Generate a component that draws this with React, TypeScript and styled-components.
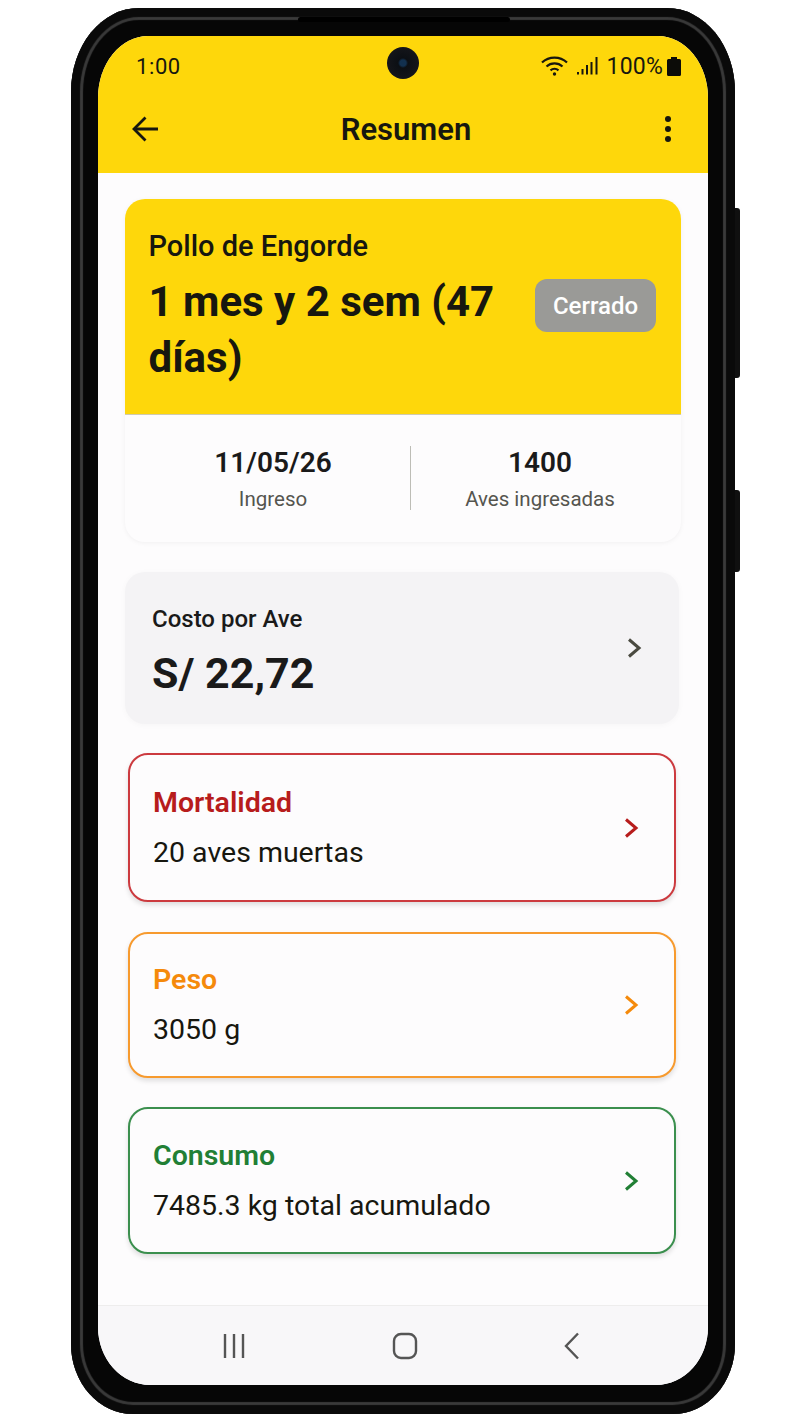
import styled, { createGlobalStyle } from "styled-components";
import { FC } from "react";

const GlobalStyle = createGlobalStyle`
html, body {
    margin: 0;
    padding: 0;
    background: #ffffff;
}
* {
    box-sizing: border-box;
}
body {
    font-family: Roboto, "Noto Sans", sans-serif;
}
`

const color = {
    yellow: "#fed70b",
    ink: "#17170f",
    red: "#b71c1c",
    redBorder: "#cc3a3f",
    orange: "#f58a0b",
    orangeBorder: "#f79a2e",
    green: "#217f35",
    greenBorder: "#3b8f4e",
    surface: "#fdfcfd",
}

interface ChevronProps {
    stroke: string;
}

const Chevron: FC<ChevronProps> = ({ stroke }) =>
    <svg width="16" height="24" viewBox="0 0 16 24" fill="none">
        <path d="M3 3.5 L13 12 L3 20.5" stroke={stroke} strokeWidth="3" strokeLinejoin="miter" />
    </svg>

const WifiIcon: FC = () =>
    <svg width="27" height="20" viewBox="0 0 27 20" fill="none" stroke="#17170f" strokeWidth="2.2">
        <path d="M1 6.5 C8 0 19 0 26 6.5" />
        <path d="M5.5 10.5 C10 6.4 17 6.4 21.5 10.5" />
        <path d="M9.5 14.3 C11.8 12.4 15.2 12.4 17.5 14.3" />
        <circle cx="13.5" cy="18" r="1.7" fill="#17170f" stroke="none" />
    </svg>

const SignalIcon: FC = () =>
    <svg width="21" height="18" viewBox="0 0 21 18" fill="#17170f">
        <rect x="0" y="15" width="2" height="2.5" />
        <rect x="4.5" y="12" width="2" height="5.5" />
        <rect x="9" y="8" width="2" height="9.5" />
        <rect x="13.5" y="5" width="2" height="12.5" />
        <rect x="18.5" y="0" width="2" height="17.5" />
    </svg>

const BatteryIcon: FC = () =>
    <svg width="14" height="19" viewBox="0 0 14 19" fill="#0c0c08">
        <path d="M4 0 H10 V2 H12.5 Q14 2 14 3.5 V17.5 Q14 19 12.5 19 H1.5 Q0 19 0 17.5 V3.5 Q0 2 1.5 2 H4 Z" />
    </svg>

const BackIcon: FC = () =>
    <svg width="28" height="26" viewBox="0 0 28 26" fill="none" stroke="#17170f" strokeWidth="2.8">
        <path d="M27 13 H3" />
        <path d="M14.5 1.5 L3 13 L14.5 24.5" />
    </svg>

const RecentsIcon: FC = () =>
    <svg width="24" height="28" viewBox="0 0 24 28" fill="none" stroke="#555" strokeWidth="2.4">
        <path d="M3 2 V26 M12 2 V26 M21 2 V26" />
    </svg>

const HomeIcon: FC = () =>
    <svg width="26" height="28" viewBox="0 0 26 28" fill="none" stroke="#555" strokeWidth="2.4">
        <rect x="2" y="2" width="22" height="24" rx="7" />
    </svg>

const NavBackIcon: FC = () =>
    <svg width="18" height="28" viewBox="0 0 18 28" fill="none" stroke="#555" strokeWidth="2.4">
        <path d="M15 1.5 L3 14 L15 26.5" />
    </svg>

const metrics = [
    { title: "Mortalidad", value: "20 aves muertas", tone: color.red, border: color.redBorder, height: 149, mt: 29, pl: 23 },
    { title: "Peso", value: "3050 g", tone: color.orange, border: color.orangeBorder, height: 146, mt: 30, pl: 23 },
    { title: "Consumo", value: "7485.3 kg total acumulado", tone: color.green, border: color.greenBorder, height: 147, mt: 29, pl: 23 },
];

const App: FC = () =>
    <>
        <GlobalStyle />
        <Page>
            <Phone>
                <SideKey $top={200} $height={170} />
                <SideKey $top={482} $height={82} />
                <Earpiece />
                <Screen>
                    <Camera />
                    <TopBar>
                        <StatusBar>
                            <Clock>1:00</Clock>
                            <StatusIcons>
                                <WifiIcon />
                                <SignalIcon />
                                <Battery>100%</Battery>
                                <BatteryIcon />
                            </StatusIcons>
                        </StatusBar>
                        <AppBar>
                            <BackIcon />
                            <AppTitle>Resumen</AppTitle>
                            <MoreDots>
                                <Dot />
                                <Dot />
                                <Dot />
                            </MoreDots>
                        </AppBar>
                    </TopBar>
                    <Content>
                        <SummaryCard>
                            <SummaryTop>
                                <SummaryText>
                                    <Breed>Pollo de Engorde</Breed>
                                    <Age>1 mes y 2 sem (47 días)</Age>
                                </SummaryText>
                                <StatusChip>Cerrado</StatusChip>
                            </SummaryTop>
                            <Stats>
                                <Stat>
                                    <StatValue>11/05/26</StatValue>
                                    <StatLabel>Ingreso</StatLabel>
                                </Stat>
                                <StatDivider />
                                <Stat>
                                    <StatValue>1400</StatValue>
                                    <StatLabel>Aves ingresadas</StatLabel>
                                </Stat>
                            </Stats>
                        </SummaryCard>
                        <CostCard>
                            <CostText>
                                <CostLabel>Costo por Ave</CostLabel>
                                <CostValue>S/ 22,72</CostValue>
                            </CostText>
                            <Chevron stroke="#4a4a40" />
                        </CostCard>
                        {metrics.map((m) =>
                            <MetricCard key={m.title} $border={m.border} $height={m.height} $mt={m.mt} $pl={m.pl}>
                                <div>
                                    <MetricTitle $tone={m.tone}>{m.title}</MetricTitle>
                                    <MetricValue>{m.value}</MetricValue>
                                </div>
                                <Chevron stroke={m.tone} />
                            </MetricCard>
                        )}
                    </Content>
                    <NavBar>
                        <RecentsIcon />
                        <HomeIcon />
                        <NavBackIcon />
                    </NavBar>
                </Screen>
            </Phone>
        </Page>
    </>

export default App;

const Page = styled.div`
width: 800px;
height: 1422px;
padding: 8px 65px 8px 71px;
background: #ffffff;
overflow: hidden;
`

const Phone = styled.div`
position: relative;
width: 664px;
height: 1406px;
padding: 28px 27px 29px 27px;
background: #060606;
border-radius: 68px 68px 62px 62px / 84px 84px 70px 70px;
box-shadow: inset 0 0 1px 9px #0a0a0a, inset 0 0 1px 12px #3a3a3a;
`

const SideKey = styled.div<{ $top: number; $height: number }>`
position: absolute;
right: -5px;
top: ${(p) => p.$top}px;
width: 5px;
height: ${(p) => p.$height}px;
background: #101010;
border-radius: 0 3px 3px 0;
`

const Earpiece = styled.div`
position: absolute;
left: 227px;
top: 9px;
width: 212px;
height: 5px;
background: #000000;
border-radius: 3px;
`

const Screen = styled.div`
position: relative;
display: flex;
flex-direction: column;
height: 100%;
background: ${color.surface};
border-radius: 50px 50px 52px 52px / 62px 62px 58px 58px;
overflow: hidden;
`

const Camera = styled.div`
position: absolute;
left: 289px;
top: 11px;
width: 32px;
height: 32px;
border-radius: 50%;
background: radial-gradient(circle at 50% 50%, #12304f 0 3px, #0c0f14 5px, #14151a 16px);
`

const TopBar = styled.header`
height: 137px;
flex-shrink: 0;
background: ${color.yellow};
color: ${color.ink};
`

const StatusBar = styled.div`
display: flex;
justify-content: space-between;
align-items: center;
height: 60px;
padding: 0 27px 0 38px;
`

const Clock = styled.span`
font-size: 22px;
letter-spacing: 0.6px;
`

const StatusIcons = styled.div`
display: flex;
align-items: center;
gap: 9px;
`

const Battery = styled.span`
margin-right: -5px;
font-size: 23px;
letter-spacing: 0.2px;
`

const AppBar = styled.div`
display: flex;
justify-content: space-between;
align-items: center;
height: 66px;
padding: 0 37px 0 33px;
`

const AppTitle = styled.h1`
margin: 0 12px 0 0;
font-size: 31px;
font-weight: 600;
`

const MoreDots = styled.div`
display: flex;
flex-direction: column;
gap: 4px;
`

const Dot = styled.span`
width: 6px;
height: 6px;
border-radius: 50%;
background: ${color.ink};
`

const Content = styled.main`
flex: 1;
padding: 26px 27px 0 27px;
`

const SummaryCard = styled.section`
height: 343px;
border-radius: 20px;
overflow: hidden;
background: ${color.surface};
box-shadow: 0 1px 5px rgba(0, 0, 0, 0.05);
`

const SummaryTop = styled.div`
display: flex;
justify-content: space-between;
align-items: center;
height: 216px;
padding: 0 25px 0 23.5px;
background: ${color.yellow};
border-bottom: 1px solid #cfcab0;
`

const SummaryText = styled.div`
width: 370px;
padding-top: 2px;
color: ${color.ink};
`

const Breed = styled.div`
margin-bottom: 12px;
font-size: 29px;
font-weight: 500;
line-height: 32px;
`

const Age = styled.div`
font-size: 42px;
font-weight: 700;
line-height: 56px;
`

const StatusChip = styled.div`
display: flex;
align-items: center;
justify-content: center;
width: 121px;
height: 53px;
margin-bottom: 2px;
background: #9a9a97;
color: #ffffff;
border-radius: 12px;
font-size: 24px;
font-weight: 500;
`

const Stats = styled.div`
display: grid;
grid-template-columns: 274px 1px 1fr;
align-items: center;
height: 127px;
padding: 0 12px 2px 11px;
`

const Stat = styled.div`
padding-top: 6px;
text-align: center;
`

const StatValue = styled.div`
font-size: 28px;
font-weight: 600;
line-height: 36px;
color: #1a1a1a;
`

const StatLabel = styled.div`
font-size: 20.5px;
line-height: 36px;
color: #55554f;
`

const StatDivider = styled.div`
height: 64px;
background: #bdbdb6;
`

const CostCard = styled.section`
display: flex;
justify-content: space-between;
align-items: center;
width: 554px;
height: 152px;
margin-top: 30px;
padding: 0 37px 0 27px;
background: #f4f3f5;
border-radius: 20px;
box-shadow: 0 1px 6px rgba(0, 0, 0, 0.03);
`

const CostText = styled.div`
padding-top: 9px;
`

const CostLabel = styled.div`
font-size: 24px;
font-weight: 500;
line-height: 30px;
color: #1a1a1a;
`

const CostValue = styled.div`
margin-top: 11px;
font-size: 43px;
font-weight: 700;
line-height: 56px;
color: #1a1a1a;
`

const MetricCard = styled.section<{ $border: string; $height: number; $mt: number; $pl: number }>`
display: flex;
justify-content: space-between;
align-items: center;
width: 548px;
height: ${(p) => p.$height}px;
margin: ${(p) => p.$mt}px 0 0 3px;
padding: 0 35px 0 ${(p) => p.$pl}px;
background: ${color.surface};
border: 2px solid ${(p) => p.$border};
border-radius: 20px;
box-shadow: 0 3px 5px rgba(0, 0, 0, 0.12);
`

const MetricTitle = styled.div<{ $tone: string }>`
font-size: 28.5px;
font-weight: 600;
line-height: 36px;
color: ${(p) => p.$tone};
`

const MetricValue = styled.div`
margin-top: 14px;
font-size: 28.5px;
line-height: 36px;
color: #17170f;
`

const NavBar = styled.nav`
display: flex;
justify-content: space-between;
align-items: center;
height: 80px;
flex-shrink: 0;
padding: 0 127px 0 124px;
background: #f8f7f9;
border-top: 1px solid #eeeded;
`
